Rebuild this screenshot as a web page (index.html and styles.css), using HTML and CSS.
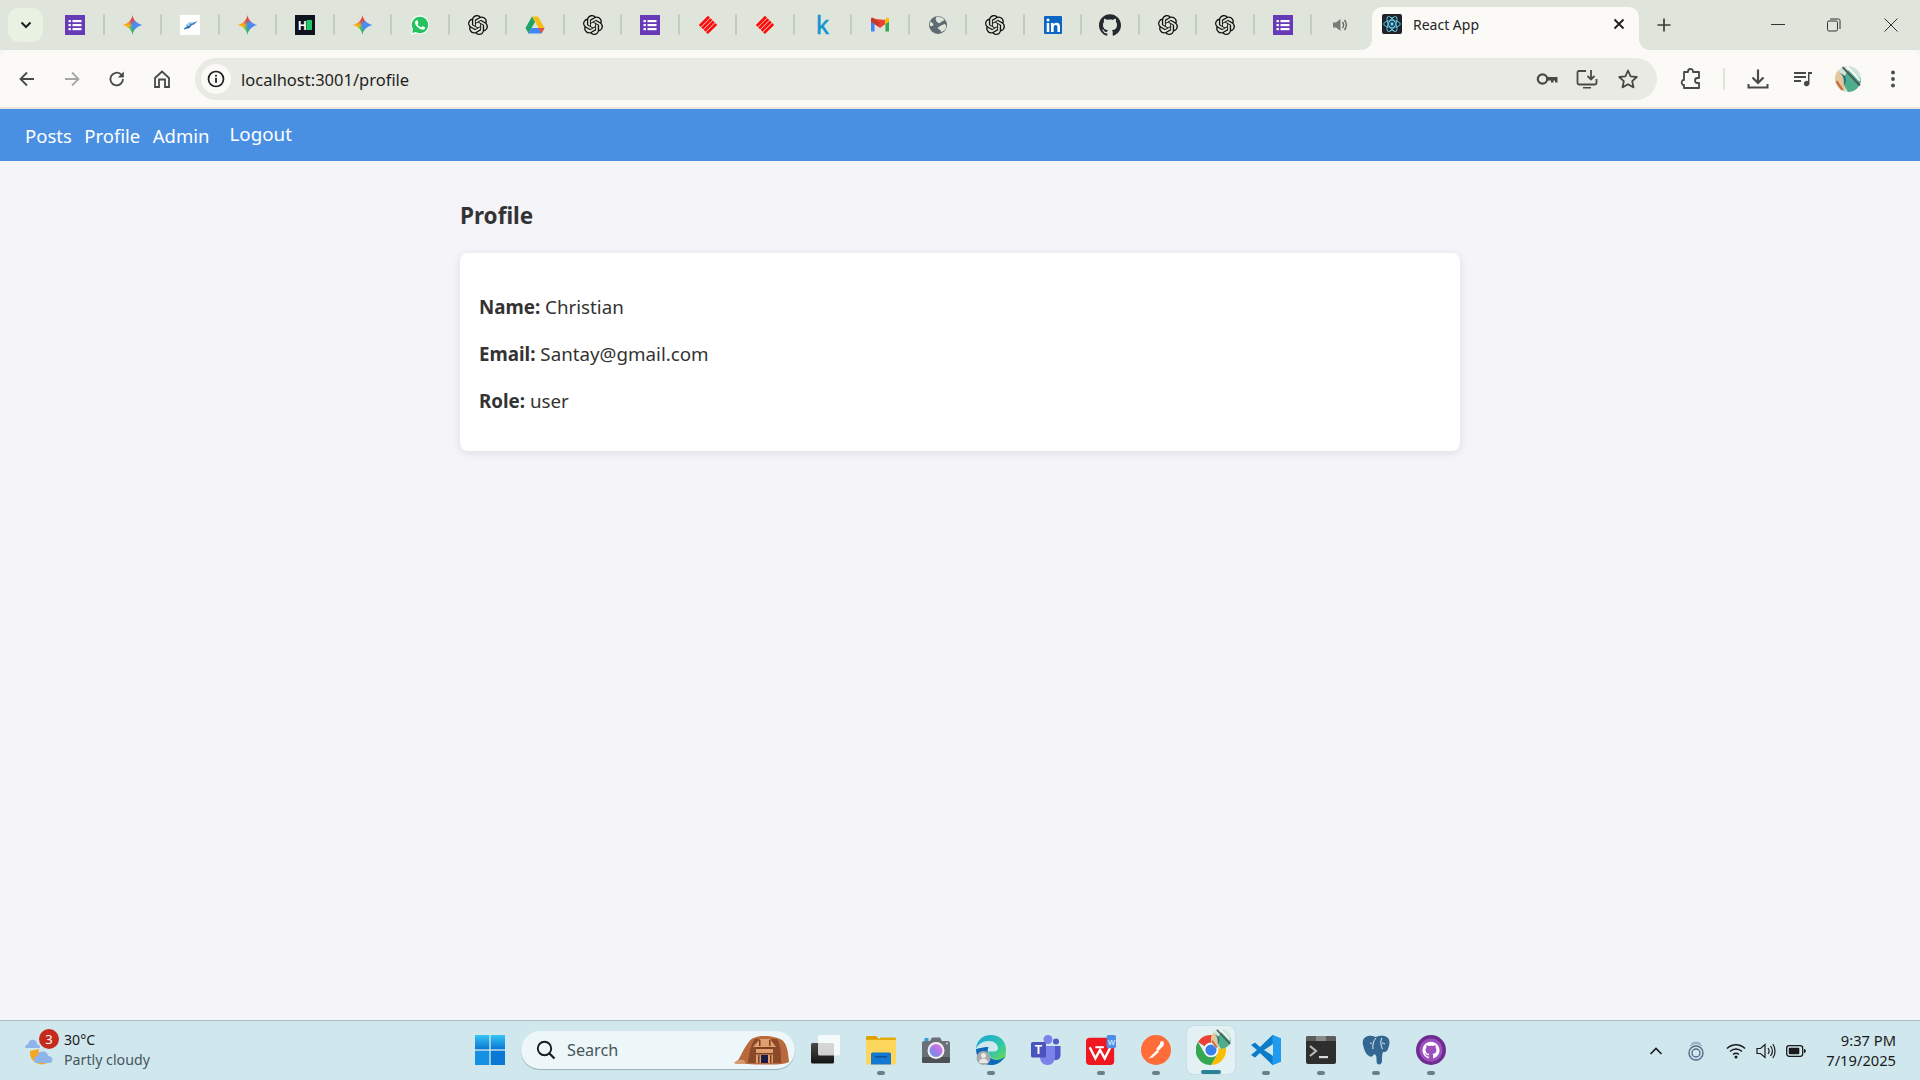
FILE: index.html
```html
<!DOCTYPE html>
<html lang="en">
<head>
<meta charset="utf-8">
<title>React App</title>
<link rel="stylesheet" href="styles.css">
</head>
<body>
<svg class="defs" aria-hidden="true">
  <defs>
    <symbol id="forms" viewBox="0 0 20 20"><rect width="20" height="20" fill="#673ab7"/><g fill="#fff"><rect x="3.5" y="5" width="2.4" height="2.2"/><rect x="3.5" y="9" width="2.4" height="2.2"/><rect x="3.5" y="13" width="2.4" height="2.2"/><rect x="7.5" y="5" width="9" height="2.2"/><rect x="7.5" y="9" width="9" height="2.2"/><rect x="7.5" y="13" width="9" height="2.2"/></g></symbol>
    <symbol id="streak" viewBox="0 0 20 20"><rect width="20" height="20" fill="#fff"/><path d="M4 13.500L10 9l7.500-3-3.500 3.500-2 .5-2.500 3-5.500 1.500z" fill="#3272b5"/><path d="M5.500 9.500h6l-2 1.500h-3zM8 7.500h7l-2.500 1.300H8z" fill="#7fb5e0"/></symbol>
    <symbol id="hn" viewBox="0 0 20 20"><rect width="20" height="20" fill="#0e141e"/><text x="3" y="14.5" class="svgb" font-size="12" fill="#fff">H</text><rect x="11.5" y="5" width="5.5" height="10" fill="#1ec96b"/></symbol>
    <symbol id="wa" viewBox="0 0 24 24"><path d="M12 .6A11.2 11.2 0 0 0 2.4 17.6L.8 23.4l6-1.6A11.2 11.2 0 1 0 12 .6z" fill="#fff"/><path d="M12 2A9.9 9.9 0 0 0 3.6 17.2L2.5 21.5l4.4-1.1A9.9 9.9 0 1 0 12 2z" fill="#25c35f"/><path d="M17.472 14.382c-.297-.149-1.758-.867-2.03-.967-.273-.099-.471-.148-.67.15-.197.297-.767.966-.94 1.164-.173.199-.347.223-.644.075-.297-.15-1.255-.463-2.39-1.475-.883-.788-1.48-1.761-1.653-2.059-.173-.297-.018-.458.13-.606.134-.133.298-.347.446-.52.149-.174.198-.298.298-.497.099-.198.05-.371-.025-.52-.075-.149-.669-1.612-.916-2.207-.242-.579-.487-.5-.669-.51-.173-.008-.371-.01-.57-.01-.198 0-.52.074-.792.372-.272.297-1.04 1.016-1.04 2.479 0 1.462 1.065 2.875 1.213 3.074.149.198 2.096 3.2 5.077 4.487.709.306 1.262.489 1.694.625.712.227 1.36.195 1.871.118.571-.085 1.758-.719 2.006-1.413.248-.694.248-1.289.173-1.413-.074-.124-.272-.198-.57-.347z" fill="#fff"/></symbol>
    <symbol id="gpt" viewBox="0 0 24 24"><path d="M22.2819 9.8211a5.9847 5.9847 0 0 0-.5157-4.9108 6.0462 6.0462 0 0 0-6.5098-2.9A6.0651 6.0651 0 0 0 4.9807 4.1818a5.9847 5.9847 0 0 0-3.9977 2.9 6.0462 6.0462 0 0 0 .7427 7.0966 5.98 5.98 0 0 0 .511 4.9107 6.051 6.051 0 0 0 6.5146 2.9001A5.9847 5.9847 0 0 0 13.2599 24a6.0557 6.0557 0 0 0 5.7718-4.2058 5.9894 5.9894 0 0 0 3.9977-2.9001 6.0557 6.0557 0 0 0-.7475-7.0729zm-9.022 12.6081a4.4755 4.4755 0 0 1-2.8764-1.0408l.1419-.0804 4.7783-2.7582a.7948.7948 0 0 0 .3927-.6813v-6.7369l2.02 1.1686a.071.071 0 0 1 .038.052v5.5826a4.504 4.504 0 0 1-4.4945 4.4944zm-9.6607-4.1254a4.4708 4.4708 0 0 1-.5346-3.0137l.142.0852 4.783 2.7582a.7712.7712 0 0 0 .7806 0l5.8428-3.3685v2.3324a.0804.0804 0 0 1-.0332.0615L9.74 19.9502a4.4992 4.4992 0 0 1-6.1408-1.6464zM2.3408 7.8956a4.485 4.485 0 0 1 2.3655-1.9728V11.6a.7664.7664 0 0 0 .3879.6765l5.8144 3.3543-2.0201 1.1685a.0757.0757 0 0 1-.071 0l-4.8303-2.7865A4.504 4.504 0 0 1 2.3408 7.872zm16.5963 3.8558L13.1038 8.364 15.1192 7.2a.0757.0757 0 0 1 .071 0l4.8303 2.7913a4.4944 4.4944 0 0 1-.6765 8.1042v-5.6772a.79.79 0 0 0-.407-.667zm2.0107-3.0231l-.142-.0852-4.7735-2.7818a.7759.7759 0 0 0-.7854 0L9.409 9.2297V6.8974a.0662.0662 0 0 1 .0284-.0615l4.8303-2.7866a4.4992 4.4992 0 0 1 6.6802 4.66zM8.3065 12.863l-2.02-1.1638a.0804.0804 0 0 1-.038-.0567V6.0742a4.4992 4.4992 0 0 1 7.3757-3.4537l-.142.0805L8.704 5.459a.7948.7948 0 0 0-.3927.6813zm1.0976-2.3654l2.602-1.4998 2.6069 1.4998v2.9994l-2.5974 1.4997-2.6067-1.4997Z" fill="#111"/></symbol>
    <symbol id="drive" viewBox="0 0 20 20"><path d="M7 1.5h6l6.5 11.5h-6z" fill="#f9bc15"/><path d="M7 1.5L.5 13l3 5.5L10 7z" fill="#1fa463"/><path d="M6.5 13h13l-3 5.5h-13.2z" fill="#4285f4"/><path d="M13.5 13h6l-3 5.5z" fill="#e8533f"/></symbol>
    <symbol id="red" viewBox="0 0 20 20"><g fill="#ff0a0a" transform="rotate(-45 10 10)"><rect x="3.500" y="3.500" width="13" height="2.700"/><rect x="3.500" y="6.900" width="13" height="2.700"/><rect x="3.500" y="10.300" width="13" height="2.700"/><rect x="3.500" y="13.700" width="13" height="2.700"/></g></symbol>
    <symbol id="gmail" viewBox="0 0 20 20"><path d="M1 5.500V16.500h3.600V9z" fill="#4285f4"/><path d="M15.400 9v7.500H19V5.500z" fill="#34a853"/><path d="M1 3.500v3L10 13l5.400-4V5z" fill="#ea4335"/><path d="M1 3.500C1 2.800 2.500 2.300 3.500 3L10 8l-2 3.500L1 6.500z" fill="#c5382c"/><path d="M15.400 4.500L16.500 3C17.500 2.300 19 2.800 19 3.500v3l-3.600 2.700z" fill="#fbbc04"/></symbol>
    <symbol id="globe" viewBox="0 0 20 20"><circle cx="10" cy="10" r="9" fill="#5f6b72"/><path d="M9 1.500c3 0 6 1.500 7.500 3.500-1.500 1.200-3 1-4 2.500s-3 0-4-1S7 3.500 9 1.500zM17 9c1 1 1.500 3 .5 5-1.500 1.500-2.500 2.500-4 3.200-.8-2-2.500-3-4-4.200 1.500-1.500 3-2.500 4.500-3s2-1 3.500-1zM2.500 6.500c1 .5 2 2 3 2.500 0 1.500-1 2.500-3.500 2-.2-2 0-3 .5-4.500z" fill="#dfe5da"/></symbol>
    <symbol id="li" viewBox="0 0 20 20"><rect x="1" y="1" width="18" height="18" rx="1" fill="#0a66c2"/><circle cx="5" cy="5" r="1.500" fill="#fff"/><rect x="3.700" y="8" width="2.600" height="9" fill="#fff"/><path d="M8 8h2.500v1.300C11.200 8.300 12.200 7.800 13.500 7.800c2.500 0 3.500 1.500 3.500 4.200v5h-2.600v-4.600c0-1.400-.4-2.300-1.700-2.300s-2 .9-2 2.300V17H8z" fill="#fff"/></symbol>
    <symbol id="gh" viewBox="0 0 24 24"><path d="M12 .297c-6.63 0-12 5.373-12 12 0 5.303 3.438 9.8 8.205 11.385.6.113.82-.258.82-.577 0-.285-.01-1.04-.015-2.04-3.338.724-4.042-1.61-4.042-1.61C4.422 18.07 3.633 17.7 3.633 17.7c-1.087-.744.084-.729.084-.729 1.205.084 1.838 1.236 1.838 1.236 1.07 1.835 2.809 1.305 3.495.998.108-.776.417-1.305.76-1.605-2.665-.3-5.466-1.332-5.466-5.93 0-1.31.465-2.38 1.235-3.22-.135-.303-.54-1.523.105-3.176 0 0 1.005-.322 3.3 1.23.96-.267 1.98-.399 3-.405 1.02.006 2.04.138 3 .405 2.28-1.552 3.285-1.23 3.285-1.23.645 1.653.24 2.873.12 3.176.765.84 1.23 1.91 1.23 3.22 0 4.61-2.805 5.625-5.475 5.92.42.36.81 1.096.81 2.22 0 1.606-.015 2.896-.015 3.286 0 .315.21.69.825.57C20.565 22.092 24 17.592 24 12.297c0-6.627-5.373-12-12-12" fill="currentColor"/></symbol>
    <symbol id="mute" viewBox="0 0 20 20"><path d="M3 7.500h3L10.500 4v12L6 12.500H3z" fill="#777d76"/><path d="M12.500 7c1.300 1.700 1.300 4.300 0 6M14.500 5c2.200 3 2.200 7 0 10" fill="none" stroke="#5d635c" stroke-width="1.300"/></symbol>
    <symbol id="react" viewBox="0 0 20 20"><rect width="20" height="20" rx="2" fill="#20232a"/><g fill="none" stroke="#61dafb" stroke-width=".9"><ellipse cx="10" cy="10" rx="8.300" ry="3.400"/><ellipse cx="10" cy="10" rx="8.300" ry="3.400" transform="rotate(60 10 10)"/><ellipse cx="10" cy="10" rx="8.300" ry="3.400" transform="rotate(120 10 10)"/></g><circle cx="10" cy="10" r="1.700" fill="#61dafb"/></symbol>

    <symbol id="win" viewBox="0 0 30 30"><defs><linearGradient id="wg" x1="0" y1="0" x2="0" y2="1"><stop offset="0" stop-color="#35c5f5"/><stop offset="1" stop-color="#0a76d3"/></linearGradient></defs><rect x="0" y="0" width="14.300" height="14.300" fill="url(#wg)"/><rect x="15.700" y="0" width="14.300" height="14.300" fill="url(#wg)"/><rect x="0" y="15.700" width="14.300" height="14.300" fill="#1690e3"/><rect x="15.700" y="15.700" width="14.300" height="14.300" fill="#0c78d6"/></symbol>
    <symbol id="petra" viewBox="0 0 56 30"><path d="M2 28C6 24 8 16 14 8 17 3 22 1 30 1c8 0 14 2 18 4 4 3 6 9 7 22-4 2-10 2.500-18 2.500-14 0-28 0-35-1.500z" fill="#b9693c"/><path d="M14 28C15 18 17 9 21 4h22c4 6 4 16 4 24z" fill="#8a4a2a"/><path d="M22 28V12h-3L26 4h10l6 8h-3v16z" fill="#e0a070"/><rect x="27" y="20" width="7" height="8" fill="#1b1b4a"/><path d="M22 12h17v2H22zM22 18h17v1.500H22zM25 5h1.500v6H25zM35 5h1.500v6H35zM24 20h1.500v8H24zM36 20h1.500v8H36z" fill="#7c3f20"/><path d="M0 28c2-3 6-4 10-3l2 4H2z" fill="#d59a72"/></symbol>
    <symbol id="taskv" viewBox="0 0 30 30"><defs><linearGradient id="tv" x1="0" y1="0" x2="0" y2="1"><stop offset="0" stop-color="#494949"/><stop offset="1" stop-color="#141414"/></linearGradient></defs><rect x="0" y="8" width="23" height="20.500" rx="1.500" fill="url(#tv)"/><rect x="7" y="0" width="22" height="20.500" rx="1.500" fill="#fff" fill-opacity=".78"/></symbol>
    <symbol id="folder" viewBox="0 0 30 30"><path d="M0 2.500C0 1.500.8 1 1.500 1H10l3 3H0z" fill="#dca000"/><path d="M0 5l13-1 2-1h13c1 0 2 .6 2 2v23c0 1-.7 1.500-1.500 1.500h-27C.7 29.500 0 29 0 28z" fill="#ffd65c"/><path d="M0 4h13l2-1.500h13.500C29.500 2.500 30 3.200 30 4v1H0z" fill="#e3ac0c"/><path d="M5 29.500V19c0-1 .8-1.500 1.700-1.500h16.600c.9 0 1.700.5 1.700 1.500v10.500z" fill="#1378d1"/><rect x="9" y="21" width="12" height="1.500" fill="#0a4f95"/></symbol>
    <symbol id="camera" viewBox="0 0 30 30"><path d="M1 8c0-1 .8-2 2-2h6l2-3.500h8L21 6h6c1.200 0 2 1 2 2v18c0 1-.8 2-2 2H3c-1.200 0-2-1-2-2z" fill="#6a7078"/><rect x="1" y="22" width="28" height="6" rx="1.500" fill="#4d5157"/><rect x="3.500" y="3" width="4" height="3" fill="#2f9fe6"/><circle cx="15" cy="15.500" r="8.500" fill="#f2f2f2"/><defs><linearGradient id="cg" x1="0" y1="1" x2="1" y2="0"><stop offset="0" stop-color="#4aa3ee"/><stop offset=".5" stop-color="#a977e8"/><stop offset="1" stop-color="#e878d8"/></linearGradient></defs><circle cx="15" cy="15.500" r="6.500" fill="url(#cg)"/><circle cx="26" cy="8.500" r="1" fill="#d5d8dc"/></symbol>
    <symbol id="edge" viewBox="0 0 30 30"><defs><linearGradient id="eg" x1="0" y1="0" x2="1" y2="1"><stop offset="0" stop-color="#1fa4da"/><stop offset=".6" stop-color="#2dc7a9"/><stop offset="1" stop-color="#75d94f"/></linearGradient></defs><path d="M15 0C6 0 .5 6 0 14c2-5 7-8 12.500-8 6 0 9.500 3.500 9.500 7 0 2-1.500 3.500-4 3.500H12c.3 4 4 8.500 10 8.500 3 0 5.500-1 7-2 1-3 1-6 1-8.500C30 6 23.500 0 15 0z" fill="url(#eg)"/><path d="M0 14c0 9 6 16 15 16 6 0 10-2.500 14-8-4 2.500-8 3.500-11 2.500C13 23 10 18 12.500 12 6 12 1.500 14 0 14z" fill="#0c6ab8"/><circle cx="7.500" cy="23" r="7" fill="#a7a9ab"/><circle cx="7.500" cy="20.500" r="2.500" fill="#e8e8e8"/><path d="M3 28c0-3 2-4.500 4.500-4.500S12 25 12 28z" fill="#e8e8e8"/></symbol>
    <symbol id="teams" viewBox="0 0 30 30"><circle cx="17" cy="4.500" r="4.500" fill="#7b83eb"/><circle cx="25" cy="6.500" r="3" fill="#5059c9"/><path d="M20 11h9.500v9c0 3-2 5-5 5h-4.500z" fill="#5059c9"/><path d="M9 11h15v11c0 4.500-3 8-7.500 8S9 26.500 9 22z" fill="#7b83eb"/><rect x="0" y="7" width="15" height="15.500" rx="1.500" fill="#4b53bc"/><text x="3.800" y="18.800" class="svgb" font-size="12" fill="#fff">T</text></symbol>
    <symbol id="wps" viewBox="0 0 32 32"><rect x="0" y="3" width="30" height="29" rx="4" fill="#f01820"/><path d="M4 13l6 12 5-9 5 9 6-12" fill="none" stroke="#fff" stroke-width="2.600"/><path d="M10 13h9" stroke="#fff" stroke-width="2.200"/><rect x="22" y="0" width="10" height="14" rx="2" fill="#4b8fe8"/><text x="23.500" y="10.500" class="svgr" font-size="8" fill="#fff">W</text></symbol>
    <symbol id="postman" viewBox="0 0 30 30"><circle cx="15" cy="15" r="15" fill="#ff6c37"/><path d="M9 22l7-7 2 2-7 6zM15 14l4-5c1.500-1.500 3.500-.5 3.500 1s-1 2-2 2.500l-3 3.500z" fill="#fff"/><circle cx="21" cy="8" r="2" fill="#fff"/><path d="M7 23.500l2-1.500 1 1z" fill="#fff"/></symbol>
    <symbol id="chrome" viewBox="0 0 30 30"><path d="M15 0a15 15 0 0 1 13 7.500H15a7.500 7.500 0 0 0-6.500 3.800L2 7A15 15 0 0 1 15 0z" fill="#ea4335"/><path d="M28 7.500A15 15 0 0 1 15 30l6.500-11.250A7.500 7.500 0 0 0 21.500 11.300z" fill="#fbbc04"/><path d="M2 7l6.500 11.250A7.500 7.500 0 0 0 21.500 18.750L15 30A15 15 0 0 1 2 7z" fill="#34a853"/><circle cx="15" cy="15" r="6.800" fill="#fff"/><circle cx="15" cy="15" r="5.600" fill="#3b7fee"/></symbol>
    <symbol id="vscode" viewBox="0 0 30 30"><path d="M21.500 0L30 3.500v23L21.500 30 9 18l-5 4.500L0 20l6-5-6-5 4-2.500 5 4.500z" fill="#0a7cc8"/><path d="M21.500 0L30 3.500v23L21.500 30z" fill="#1f9cf0"/><path d="M22 9L13 15l9 6z" fill="#cfe7ed"/></symbol>
    <symbol id="term" viewBox="0 0 30 30"><rect x="0" y="1" width="30" height="28" rx="2" fill="#2e2e2e"/><path d="M2 1h26c1 0 2 1 2 2v3H0V3c0-1 1-2 2-2z" fill="#5c5c5c"/><rect x="10" y="1" width="10" height="5" fill="#8a8a8a"/><path d="M4 11l6 5-6 5" fill="none" stroke="#b9b9b9" stroke-width="2.200"/><rect x="13" y="21" width="9" height="2.200" fill="#d8d8d8"/></symbol>
    <symbol id="pg" viewBox="0 0 30 30"><path d="M7 1c4-1 6 .5 8 1 3-1.500 9-2 12 1 2.500 3 1.500 8-.5 12-1 2-3 2-4.500 2-1 2-1 6-1 9 0 1.500-.8 3.500-3 3.500-2.500 0-2.500-3-2.500-5.500 0-3-.5-4-2.500-5-1 2.500-3 3.500-5 2C3.500 18 3 13 2 10 1 5 3 2 7 1z" fill="#336791"/><path d="M15 3c-3 3-3.500 8-3 11M21 3c-2 3-1 8 .5 11M9 8c1 0 2 .5 2 1M21 8c1 0 2 .5 3 1" fill="none" stroke="#e8f1f5" stroke-width="1"/></symbol>
    <symbol id="ghd" viewBox="0 0 30 30"><circle cx="15" cy="15" r="15" fill="#6e2c91"/><circle cx="15" cy="15" r="11.500" fill="#9d4fc0"/><g transform="translate(6.500 6.500) scale(.71)"><path d="M12 .297c-6.63 0-12 5.373-12 12 0 5.303 3.438 9.8 8.205 11.385.6.113.82-.258.82-.577 0-.285-.01-1.04-.015-2.04-3.338.724-4.042-1.61-4.042-1.61C4.422 18.07 3.633 17.7 3.633 17.7c-1.087-.744.084-.729.084-.729 1.205.084 1.838 1.236 1.838 1.236 1.07 1.835 2.809 1.305 3.495.998.108-.776.417-1.305.76-1.605-2.665-.3-5.466-1.332-5.466-5.93 0-1.31.465-2.38 1.235-3.22-.135-.303-.54-1.523.105-3.176 0 0 1.005-.322 3.3 1.23.96-.267 1.98-.399 3-.405 1.02.006 2.04.138 3 .405 2.28-1.552 3.285-1.23 3.285-1.23.645 1.653.24 2.873.12 3.176.765.84 1.23 1.91 1.23 3.22 0 4.61-2.805 5.625-5.475 5.92.42.36.81 1.096.81 2.22 0 1.606-.015 2.896-.015 3.286 0 .315.21.69.825.57C20.565 22.092 24 17.592 24 12.297c0-6.627-5.373-12-12-12" fill="#fff"/></g></symbol>
    <symbol id="avatar" viewBox="0 0 24 24"><circle cx="12" cy="12" r="12" fill="#cfe6d6"/><path d="M12 24A12 12 0 0 0 24 12L12 4 6 14z" fill="#4fae8a"/><path d="M0 12a12 12 0 0 0 9 11.600L8 10 3 4a12 12 0 0 0-3 8z" fill="#e4c79a"/><path d="M7 1l16 17" stroke="#4a5560" stroke-width="1.800"/><path d="M11 .5l12 13" stroke="#fafafa" stroke-width="2"/><path d="M4 6c3 2 5 6 4 12 2-2 3-5 1-9z" fill="#236f8c"/><path d="M1.500 14c2 3 3 5 5.500 8" stroke="#c86a44" stroke-width="2" fill="none"/></symbol>
    <symbol id="weather" viewBox="0 0 30 30"><path d="M5 16a12 12 0 0 0 19 11 11 11 0 0 1-10-13z" fill="#f5a623"/><path d="M0 13c0-2.500 1.500-3.500 3-3.500.5-3.500 3-5.500 6-4.500 2 .500 3 2 3 4.500 2 0 3 1.500 3 3.500z" fill="#8fb4ea"/><path d="M12 28c-2 0-3-1.500-3-3.500S10.500 21 12.500 21c.5-3.500 3-4.500 5.500-4.500s5 2 5 4.500c2.500 0 4.500 1.500 4.500 3.500S26.500 28 24 28z" fill="#8fb4ea"/></symbol>
  </defs>
</svg>

<div class="chrome-strip">
  <div class="tab-menu"><svg class="ic-12" viewBox="0 0 12 12"><path d="M1.500 3.500L6 8l4.500-4.500" fill="none" stroke="#1f1f1f" stroke-width="2"/></svg></div>
  <div class="pins">
    <div class="pin"><svg class="fav"><use href="#forms"/></svg></div>
    <div class="pin"><span class="gemini"></span></div>
    <div class="pin"><svg class="fav"><use href="#streak"/></svg></div>
    <div class="pin"><span class="gemini"></span></div>
    <div class="pin"><svg class="fav"><use href="#hn"/></svg></div>
    <div class="pin"><span class="gemini"></span></div>
    <div class="pin"><svg class="fav"><use href="#wa"/></svg></div>
    <div class="pin"><svg class="fav"><use href="#gpt"/></svg></div>
    <div class="pin"><svg class="fav"><use href="#drive"/></svg></div>
    <div class="pin"><svg class="fav"><use href="#gpt"/></svg></div>
    <div class="pin"><svg class="fav"><use href="#forms"/></svg></div>
    <div class="pin"><svg class="fav"><use href="#red"/></svg></div>
    <div class="pin"><svg class="fav"><use href="#red"/></svg></div>
    <div class="pin"><span class="k-fav">k</span></div>
    <div class="pin"><svg class="fav"><use href="#gmail"/></svg></div>
    <div class="pin"><svg class="fav"><use href="#globe"/></svg></div>
    <div class="pin"><svg class="fav"><use href="#gpt"/></svg></div>
    <div class="pin"><svg class="fav"><use href="#li"/></svg></div>
    <div class="pin"><svg class="fav gh-fav"><use href="#gh"/></svg></div>
    <div class="pin"><svg class="fav"><use href="#gpt"/></svg></div>
    <div class="pin"><svg class="fav"><use href="#gpt"/></svg></div>
    <div class="pin"><svg class="fav"><use href="#forms"/></svg></div>
    <div class="pin pin-last"><svg class="fav"><use href="#mute"/></svg></div>
  </div>
  <div class="active-tab">
    <svg class="fav"><use href="#react"/></svg>
    <span class="tab-title">React App</span>
    <svg class="tab-close" viewBox="0 0 12 12"><path d="M1.500 1.500l9 9M10.500 1.500l-9 9" stroke="#1f1f1f" stroke-width="1.900"/></svg>
  </div>
  <div class="new-tab"><svg class="ic-14" viewBox="0 0 14 14"><path d="M7 .5v13M.5 7h13" stroke="#3a3f38" stroke-width="1.700"/></svg></div>
  <div class="win-ctl">
    <div class="wc"><svg class="ic-14" viewBox="0 0 14 14"><path d="M0 6.500h14" stroke="#333" stroke-width="1"/></svg></div>
    <div class="wc"><svg class="ic-14" viewBox="0 0 14 14"><rect x=".5" y="3" width="10" height="10" rx="1.500" fill="none" stroke="#333"/><path d="M3 1h8.500c1 0 1.500.5 1.500 1.500V11" fill="none" stroke="#333"/></svg></div>
    <div class="wc"><svg class="ic-14" viewBox="0 0 14 14"><path d="M.5.500l13 13M13.500.5l-13 13" stroke="#333" stroke-width="1"/></svg></div>
  </div>
</div>

<div class="toolbar">
  <div class="tb-cell"><svg class="ic-20" viewBox="0 0 20 20"><path d="M17 10H4M10 3.500L3.500 10l6.500 6.500" fill="none" stroke="#474b45" stroke-width="1.800"/></svg></div>
  <div class="tb-cell"><svg class="ic-20" viewBox="0 0 20 20"><path d="M3 10h13M10 3.500l6.500 6.500-6.500 6.500" fill="none" stroke="#a6a8a3" stroke-width="1.800"/></svg></div>
  <div class="tb-cell"><svg class="ic-20" viewBox="0 0 20 20"><path d="M16 10a6.300 6.300 0 1 1-2-4.600L16 7.500" fill="none" stroke="#474b45" stroke-width="1.800"/><path d="M16.800 2.500v6h-6z" fill="#474b45"/></svg></div>
  <div class="tb-cell"><svg class="ic-20" viewBox="0 0 20 20"><path d="M3 9l7-6.500L17 9v9h-4V10.500H7V18H3z" fill="none" stroke="#474b45" stroke-width="1.800"/></svg></div>
  <div class="omnibox">
    <div class="site-info"><svg class="ic-18" viewBox="0 0 18 18"><circle cx="9" cy="9" r="7.500" fill="none" stroke="#1f1f1f" stroke-width="1.700"/><rect x="8.100" y="7.800" width="1.800" height="5" fill="#1f1f1f"/><rect x="8.100" y="4.800" width="1.800" height="1.800" fill="#1f1f1f"/></svg></div>
    <span class="url">localhost:3001/profile</span>
    <div class="omni-actions">
      <div class="omni-cell"><svg class="ic-22" viewBox="0 0 22 22"><circle cx="6.500" cy="11" r="4.700" fill="none" stroke="#474b45" stroke-width="2.200"/><path d="M11 9h10.500v5.500h-2.500v-2h-1.500v2H15v-2h-4z" fill="#474b45"/></svg></div>
      <div class="omni-cell"><svg class="ic-22" viewBox="0 0 22 22"><path d="M10 3H3c-1 0-1.500.5-1.500 1.500V15c0 1 .5 1.500 1.500 1.500h16c1 0 1.500-.5 1.500-1.500V11" fill="none" stroke="#474b45" stroke-width="1.800"/><path d="M7 19h8v1.500H7z" fill="#474b45"/><path d="M15 2v9M11.500 8l3.500 3.500L18.500 8" fill="none" stroke="#474b45" stroke-width="1.800"/></svg></div>
      <div class="omni-cell"><svg class="ic-22" viewBox="0 0 22 22"><path d="M11 2.500l2.600 5.800 6.200.7-4.600 4.200 1.300 6.200L11 16.200 5.500 19.400l1.300-6.200L2.200 9l6.200-.7z" fill="none" stroke="#474b45" stroke-width="1.800" stroke-linejoin="round"/></svg></div>
    </div>
  </div>
  <div class="tb-cell tb-ext"><svg class="ic-22" viewBox="0 0 22 22"><path d="M8 4V3.500a2.500 2.500 0 0 1 5 0V4h6v6h-1.500a2.500 2.500 0 0 0 0 5H19v5H4v-3H3a3 3 0 0 1 0-5h1V4z" fill="none" stroke="#474b45" stroke-width="1.800" stroke-linejoin="round"/></svg></div>
  <div class="tb-sep"></div>
  <div class="tb-cell"><svg class="ic-22" viewBox="0 0 22 22"><path d="M11 1.500v13M5.500 9.500l5.500 5.500 5.500-5.500" fill="none" stroke="#474b45" stroke-width="2.200"/><path d="M1.500 16v3.500h19V16" fill="none" stroke="#474b45" stroke-width="2"/></svg></div>
  <div class="tb-cell"><svg class="ic-20" viewBox="0 0 20 20"><path d="M1 4h12M1 8h12M1 12h7" stroke="#474b45" stroke-width="1.800"/><path d="M15 3h4v2h-2.500v9.500a2.800 2.800 0 1 1-1.500-2.500z" fill="#474b45"/></svg></div>
  <div class="tb-cell"><svg class="ic-26" viewBox="0 0 24 24"><use href="#avatar"/></svg></div>
  <div class="tb-cell"><svg class="ic-20" viewBox="0 0 20 20"><circle cx="10" cy="3.500" r="1.900" fill="#474b45"/><circle cx="10" cy="10" r="1.900" fill="#474b45"/><circle cx="10" cy="16.500" r="1.900" fill="#474b45"/></svg></div>
</div>

<nav class="navbar">
  <a class="nav-link">Posts</a>
  <a class="nav-link">Profile</a>
  <a class="nav-link">Admin</a>
  <button class="logout">Logout</button>
</nav>

<main class="page">
  <h2 class="page-title">Profile</h2>
  <section class="card">
    <p class="row"><strong>Name:</strong> Christian</p>
    <p class="row"><strong>Email:</strong> Santay@gmail.com</p>
    <p class="row"><strong>Role:</strong> user</p>
  </section>
</main>

<footer class="taskbar">
  <div class="tb-left">
    <div class="weather">
      <svg class="weather-ic"><use href="#weather"/></svg>
      <span class="badge">3</span>
    </div>
    <div class="weather-txt">
      <span class="temp">30°C</span>
      <span class="cond">Partly cloudy</span>
    </div>
  </div>
  <div class="tb-center">
    <svg class="win-logo"><use href="#win"/></svg>
    <div class="search">
      <svg class="search-ic" viewBox="0 0 20 20"><circle cx="8.500" cy="8.500" r="6.700" fill="none" stroke="#1b1b1b" stroke-width="1.900"/><path d="M13.500 13.500l5 5" stroke="#1b1b1b" stroke-width="2.200"/></svg>
      <span class="search-txt">Search</span>
      <svg class="petra"><use href="#petra"/></svg>
    </div>
    <div class="app"><svg class="app-ic"><use href="#taskv"/></svg></div>
    <div class="app run"><svg class="app-ic"><use href="#folder"/></svg></div>
    <div class="app"><svg class="app-ic"><use href="#camera"/></svg></div>
    <div class="app run"><svg class="app-ic"><use href="#edge"/></svg></div>
    <div class="app"><svg class="app-ic"><use href="#teams"/></svg></div>
    <div class="app run"><svg class="app-ic"><use href="#wps"/></svg></div>
    <div class="app run"><svg class="app-ic"><use href="#postman"/></svg></div>
    <div class="app active"><svg class="app-ic"><use href="#chrome"/></svg><svg class="chrome-av"><use href="#avatar"/></svg></div>
    <div class="app run"><svg class="app-ic"><use href="#vscode"/></svg></div>
    <div class="app run"><svg class="app-ic"><use href="#term"/></svg></div>
    <div class="app run"><svg class="app-ic"><use href="#pg"/></svg></div>
    <div class="app run"><svg class="app-ic"><use href="#ghd"/></svg></div>
  </div>
  <div class="tb-right">
    <div class="tray tray-gap"><svg class="ic-16" viewBox="0 0 16 16"><path d="M2.500 11L8 5.500l5.500 5.500" fill="none" stroke="#1a1a1a" stroke-width="1.600"/></svg></div>
    <div class="tray tray-gap"><svg class="ic-20" viewBox="0 0 20 20"><circle cx="10" cy="12" r="7" fill="none" stroke="#5b6a8a" stroke-width="1.400"/><circle cx="10" cy="12" r="4" fill="none" stroke="#5b6a8a" stroke-width="1.400"/><path d="M4 5c3-3 9-3 12 0M5.500 2.500c3-1.500 6-1.500 9 0" fill="none" stroke="#9aaac0" stroke-width="1.200"/></svg></div>
    <div class="tray"><svg class="ic-20" viewBox="0 0 20 20"><path d="M1 7.500c5-5 13-5 18 0M4 10.500c3.500-3.300 8.500-3.300 12 0M7 13.500c1.800-1.500 4.200-1.500 6 0" fill="none" stroke="#1a1a1a" stroke-width="1.500"/><circle cx="10" cy="16" r="1.500" fill="#1a1a1a"/></svg></div>
    <div class="tray"><svg class="ic-20" viewBox="0 0 20 20"><path d="M1 7.500h3.500L9 3.500v13l-4.500-4H1z" fill="none" stroke="#1a1a1a" stroke-width="1.200"/><path d="M12 7c1.300 1.800 1.300 4.200 0 6M14.500 5c2.300 3 2.300 7 0 10M16.800 3c3 4 3 10 0 14" fill="none" stroke="#1a1a1a" stroke-width="1.200"/></svg></div>
    <div class="tray"><svg class="ic-20" viewBox="0 0 20 20"><rect x=".7" y="4.700" width="16" height="10.600" rx="2.500" fill="none" stroke="#1a1a1a" stroke-width="1.300"/><rect x="2.800" y="6.800" width="10.500" height="6.400" rx="1" fill="#1a1a1a"/><path d="M18 8c1.300 0 1.800 1 1.800 2s-.5 2-1.800 2z" fill="#1a1a1a"/></svg></div>
    <div class="clock"><span>9:37 PM</span><span>7/19/2025</span></div>
  </div>
</footer>
</body>
</html>
```

FILE: styles.css
```css
* { box-sizing: border-box; }
html, body { height: 100%; }
body {
  margin: 0;
  height: 1080px;
  overflow: hidden;
  display: flex;
  flex-direction: column;
  background: #f4f4f9;
  color: #333;
  font-family: "Noto Sans", "Open Sans", sans-serif;
}
.defs { width: 0; height: 0; position: absolute; }
.svgb { font-family: "Liberation Sans", sans-serif; font-weight: 700; }
.svgr { font-family: "Liberation Sans", sans-serif; }

.ic-12 { width: 12px; height: 12px; }
.ic-14 { width: 14px; height: 14px; }
.ic-16 { width: 16px; height: 16px; }
.ic-18 { width: 18px; height: 18px; }
.ic-20 { width: 20px; height: 20px; }
.ic-22 { width: 22px; height: 22px; }
.ic-26 { width: 26px; height: 26px; }

/* tab strip */
.chrome-strip {
  height: 50px;
  flex: none;
  display: flex;
  align-items: flex-end;
  background: #dfe5da;
  padding-left: 8px;
}
.tab-menu {
  width: 35px;
  height: 34px;
  margin-bottom: 8px;
  border-radius: 11px;
  background: #e9f1e3;
  display: flex;
  align-items: center;
  justify-content: center;
}
.pins { display: flex; margin-left: 3.25px; height: 50px; }
.pin {
  width: 57.5px;
  height: 50px;
  display: flex;
  align-items: center;
  justify-content: center;
  position: relative;
}
.pin::after {
  content: "";
  position: absolute;
  right: -1px;
  top: 14px;
  width: 2px;
  height: 21px;
  border-radius: 1px;
  background: #c3cdbd;
}
.pin-last::after { display: none; }
.fav { width: 20px; height: 20px; flex: none; }
.gh-fav { color: #24292f; width: 22px; height: 22px; }
.gemini {
  width: 20px;
  height: 20px;
  background:
    radial-gradient(circle at 60% 50%, #4a8df0 0 12%, transparent 38%),
    conic-gradient(#e8453c 0 6%, #8a78d8 14%, #4285f4 25% 40%, #2fb36b 50%, #6fbf4a 62%, #fbbc04 72%, #f28b30 82%, #e8453c 94%);
  clip-path: path("M10 0C10.800 5.200 14.800 9.200 20 10C14.800 10.800 10.800 14.800 10 20C9.200 14.800 5.200 10.800 0 10C5.200 9.200 9.200 5.200 10 0Z");
}
.k-fav {
  font-family: "Liberation Sans", sans-serif;
  font-size: 25px;
  line-height: 20px;
  color: #0d96d1;
  -webkit-text-stroke: .5px #0d96d1;
}
.active-tab {
  position: relative;
  width: 267px;
  height: 43px;
  margin-left: 3.25px;
  padding: 0 14px 9px 10px;
  background: #fbfaf6;
  border-radius: 10px 10px 0 0;
  display: flex;
  align-items: center;
}
.active-tab::before, .active-tab::after {
  content: "";
  position: absolute;
  bottom: 0;
  width: 10px;
  height: 10px;
}
.active-tab::before { left: -10px; background: radial-gradient(circle at 0 0, transparent 9.500px, #fbfaf6 10px); }
.active-tab::after { right: -10px; background: radial-gradient(circle at 100% 0, transparent 9.500px, #fbfaf6 10px); }
.tab-title { margin-left: 11px; font-size: 14px; color: #24261f; }
.tab-close { width: 12px; height: 12px; margin-left: auto; }
.new-tab { width: 50px; height: 50px; display: flex; align-items: center; justify-content: center; }
.win-ctl { margin-left: auto; display: flex; height: 50px; padding-right: 1px; }
.wc { width: 56.5px; height: 50px; display: flex; align-items: center; justify-content: center; }

/* toolbar */
.toolbar {
  height: 59px;
  flex: none;
  display: flex;
  align-items: center;
  padding: 1px 5px 0 4.500px;
  background: #fbfaf6;
  border-bottom: 2px solid #ebe6df;
  border-radius: 10px 10px 0 0;
  position: relative;
}
.tb-cell { width: 45px; height: 42px; flex: none; display: flex; align-items: center; justify-content: center; }
.omnibox {
  flex: 1;
  height: 42px;
  margin-left: 10.500px;
  border-radius: 21px;
  background: #e9eae3;
  display: flex;
  align-items: center;
  padding: 0 9px 0 6px;
}
.site-info {
  width: 30px;
  height: 30px;
  border-radius: 50%;
  background: #fbfaf6;
  display: flex;
  align-items: center;
  justify-content: center;
}
.url { margin-left: 10px; font-size: 16.500px; color: #1f1f1f; }
.omni-actions { margin-left: auto; display: flex; }
.omni-cell { width: 40.500px; display: flex; justify-content: center; }
.tb-ext { margin-left: 11.500px; }
.tb-sep { width: 2px; height: 22px; margin: 0 10px 0 9.500px; background: #dfe5da; flex: none; }

/* app nav */
.navbar {
  height: 52px;
  flex: none;
  display: flex;
  align-items: center;
  padding-left: 25px;
  background: #4a90e2;
}
.nav-link { color: #fff; font-size: 18.500px; margin-right: 12.500px; }
.logout {
  margin: -4px 0 0 7.500px;
  padding: 0;
  border: 0;
  background: none;
  color: #fff;
  font: inherit;
  font-size: 18.750px;
}

/* content */
.page { flex: 1; width: 1000px; margin: 0 auto; padding-top: 37px; }
.page-title { margin: 0 0 19px; font-size: 22.500px; line-height: 36px; font-weight: 700; color: #333; }
.card {
  height: 198px;
  padding: 20px 20px 20px 19px;
  background: #fff;
  border-radius: 8px;
  box-shadow: 0 2px 10px rgba(0, 0, 0, .1);
}
.row { margin: 20px 0; font-size: 18.750px; line-height: 27px; color: #333; }
.row strong { font-weight: 700; }

/* taskbar */
.taskbar {
  height: 60px;
  flex: none;
  display: flex;
  align-items: center;
  background: #cfe7ed;
  border-top: 1px solid #a9bcc2;
}
.tb-left { width: 475px; flex: none; display: flex; align-items: center; padding: 0 0 2px 25px; }
.weather { position: relative; width: 39px; height: 30px; }
.weather-ic { width: 30px; height: 30px; }
.badge {
  position: absolute;
  left: 14px;
  top: -6px;
  width: 20px;
  height: 20px;
  border-radius: 50%;
  background: #c42b1c;
  color: #fff;
  font-size: 13px;
  line-height: 20px;
  text-align: center;
}
.weather-txt { display: flex; flex-direction: column; font-size: 14.200px; line-height: 20px; }
.temp { color: #1a1a1a; }
.cond { color: #46565d; }
.tb-center { display: flex; align-items: center; height: 59px; padding-bottom: 1px; }
.win-logo { width: 30px; height: 30px; }
.search {
  width: 274px;
  height: 38px;
  margin: 0 3.500px 0 16px;
  padding: 0 5px 0 15px;
  display: flex;
  align-items: center;
  border-radius: 19px;
  background: #edf6f8;
  box-shadow: 0 1px 1px rgba(70, 100, 110, .4);
}
.search-ic { width: 20px; height: 20px; }
.search-txt { margin-left: 11px; font-size: 16.200px; color: #46565d; }
.petra { width: 56px; height: 30px; margin: 0 0 0 auto; }
.app { width: 55px; height: 58px; display: flex; align-items: center; justify-content: center; position: relative; }
.app-ic { width: 30px; height: 30px; }
.run::after {
  content: "";
  position: absolute;
  left: 23.500px;
  top: 50px;
  width: 8px;
  height: 3.500px;
  border-radius: 2px;
  background: #6d7f86;
}
.active::before {
  content: "";
  position: absolute;
  left: 3.500px;
  top: 5px;
  width: 48px;
  height: 48px;
  border-radius: 6px;
  background: rgba(255, 255, 255, .42);
  box-shadow: 0 0 1px rgba(70, 100, 110, .4);
}
.active::after {
  content: "";
  position: absolute;
  left: 17.500px;
  top: 49px;
  width: 20px;
  height: 4px;
  border-radius: 2px;
  background: #2a8296;
}
.active .app-ic { position: relative; }
.chrome-av { position: absolute; left: 27px; top: 8px; width: 20px; height: 20px; }
.tb-right { margin-left: auto; padding-right: 24px; display: flex; align-items: center; }
.tray { width: 30px; height: 30px; display: flex; align-items: center; justify-content: center; }
.tray-gap { margin-right: 10px; }
.clock {
  width: 70px;
  margin-left: 15px;
  padding-bottom: 2px;
  display: flex;
  flex-direction: column;
  align-items: flex-end;
  font-size: 14.700px;
  line-height: 20px;
  color: #1a1a1a;
  white-space: nowrap;
}
```
